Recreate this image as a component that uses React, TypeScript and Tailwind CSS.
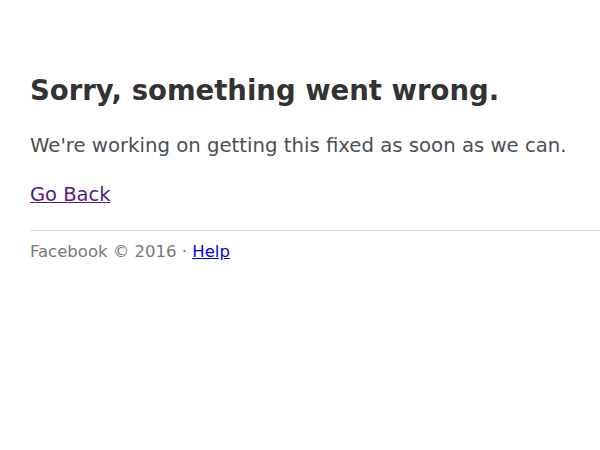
export default function App() {
  return (
    <div className="w-[600px] h-[450px] bg-white overflow-hidden" style={{ fontFamily: '"DejaVu Sans", Verdana, sans-serif' }}>
      <div className="pt-[74px] pl-[30px]">
        <h1 className="text-[27.5px] leading-[32px] font-bold text-[#333333]">Sorry, something went wrong.</h1>
        <p className="mt-[28px] text-[19.7px] leading-[24px] text-[#4b4f56]">We're working on getting this fixed as soon as we can.</p>
        <p className="mt-[25px] text-[19.5px] leading-[24px]">
          <a href="#" className="text-[#551a8b] underline">Go Back</a>
        </p>
      </div>
      <div className="ml-[30px] mt-[23px] border-t border-[#dddddd]" />
      <div className="pl-[30px] mt-[11px] text-[16.5px] leading-[20px] text-[#777777]">
        Facebook © 2016 · <a href="#" className="text-[#0000ee] underline">Help</a>
      </div>
    </div>
  );
}
